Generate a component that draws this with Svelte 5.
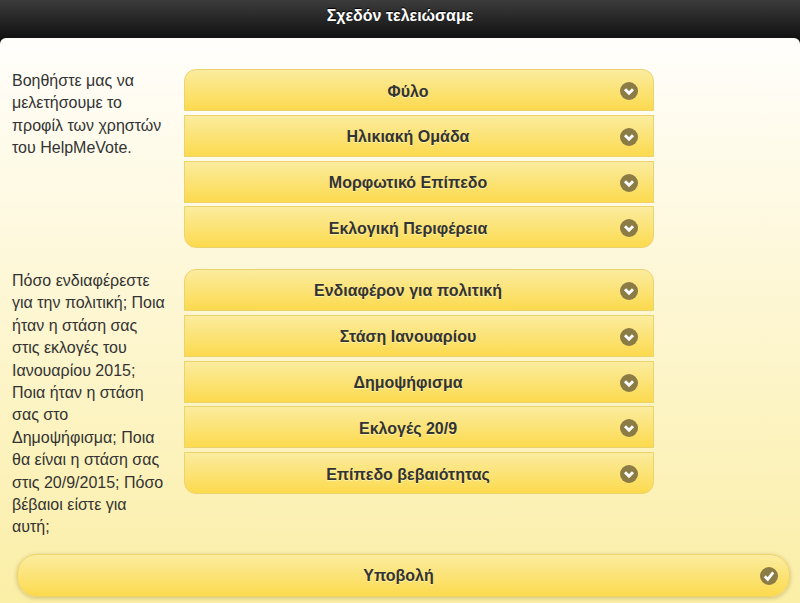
<script>
  const groups = [
    {
      text: "Βοηθήστε μας να μελετήσουμε το προφίλ των χρηστών του HelpMeVote.",
      fields: ["Φύλο", "Ηλικιακή Ομάδα", "Μορφωτικό Επίπεδο", "Εκλογική Περιφέρεια"],
    },
    {
      text: "Πόσο ενδιαφέρεστε για την πολιτική; Ποια ήταν η στάση σας στις εκλογές του Ιανουαρίου 2015; Ποια ήταν η στάση σας στο Δημοψήφισμα; Ποια θα είναι η στάση σας στις 20/9/2015; Πόσο βέβαιοι είστε για αυτή;",
      fields: ["Ενδιαφέρον για πολιτική", "Στάση Ιανουαρίου", "Δημοψήφισμα", "Εκλογές 20/9", "Επίπεδο βεβαιότητας"],
    },
  ];
</script>

<div class="page">
  <header class="bar">Σχεδόν τελειώσαμε</header>
  <main class="content">
    {#each groups as group}
      <section class="group">
        <p class="intro">{group.text}</p>
        <div class="fields">
          {#each group.fields as field}
            <button class="select" type="button">
              <span class="label">{field}</span>
              <svg class="icon" viewBox="0 0 18 18" aria-hidden="true">
                <circle cx="9" cy="9" r="9" fill="#8b7b45" />
                <path d="M5 7.2 9 11.2 13 7.2" fill="none" stroke="#fff" stroke-width="3" />
              </svg>
            </button>
          {/each}
        </div>
      </section>
    {/each}
    <button class="submit" type="button">
      <span class="label">Υποβολή</span>
      <svg class="icon" viewBox="0 0 18 18" aria-hidden="true">
        <circle cx="9" cy="9" r="9" fill="#8b7b45" />
        <path d="M4.8 9.2 7.8 12.4 13.2 5.4" fill="none" stroke="#fff" stroke-width="2.8" />
      </svg>
    </button>
  </main>
</div>

<style>
  :global(body) {
    margin: 0;
    background: #111;
  }

  .page {
    width: 800px;
    height: 603px;
    overflow: hidden;
    background: #111;
    font-family: "Liberation Sans", Arial, sans-serif;
    color: #333;
  }

  .bar {
    height: 38px;
    line-height: 31px;
    text-align: center;
    font-size: 16px;
    font-weight: 700;
    color: #fff;
    text-shadow: 0 -1px 1px #000;
    background: linear-gradient(#3c3c3c, #111);
  }

  .content {
    height: 565px;
    box-sizing: border-box;
    padding-top: 31px;
    border-radius: 6px 6px 0 0;
    background: linear-gradient(#fffefb, #fbeea6);
  }

  .group {
    display: flex;
    align-items: flex-start;
  }

  .group + .group {
    margin-top: 20.6px;
  }

  .intro {
    flex: none;
    width: 156px;
    margin: 0 16px 0 0;
    padding: 1px 0 0 12px;
    font-size: 16px;
    line-height: 22.4px;
  }

  .fields {
    width: 470px;
    display: flex;
    flex-direction: column;
    gap: 3.8px;
  }

  .select,
  .submit {
    position: relative;
    display: block;
    width: 100%;
    height: 42px;
    box-sizing: border-box;
    border: 1px solid #edd36e;
    background: linear-gradient(#fbec9f, #fcda4e);
    font: 700 16px/1 "Liberation Sans", Arial, sans-serif;
    color: #333;
    text-align: center;
    text-shadow: 0 1px 0 #fff3a8;
  }

  .select {
    padding: 3px 37px 0 15px;
  }

  .select:first-child {
    border-radius: 12px 12px 0 0;
  }

  .select:last-child {
    border-radius: 0 0 12px 12px;
  }

  .submit {
    width: 773px;
    height: 43px;
    margin: 15.2px 0 0 17px;
    padding: 0 40px 0 30px;
    border-radius: 20px;
    box-shadow: 0 1px 4px rgba(120, 100, 30, 0.35);
  }

  .icon {
    position: absolute;
    right: 15px;
    top: 12px;
    width: 18px;
    height: 18px;
  }

  .submit .icon {
    right: 11px;
  }
</style>
